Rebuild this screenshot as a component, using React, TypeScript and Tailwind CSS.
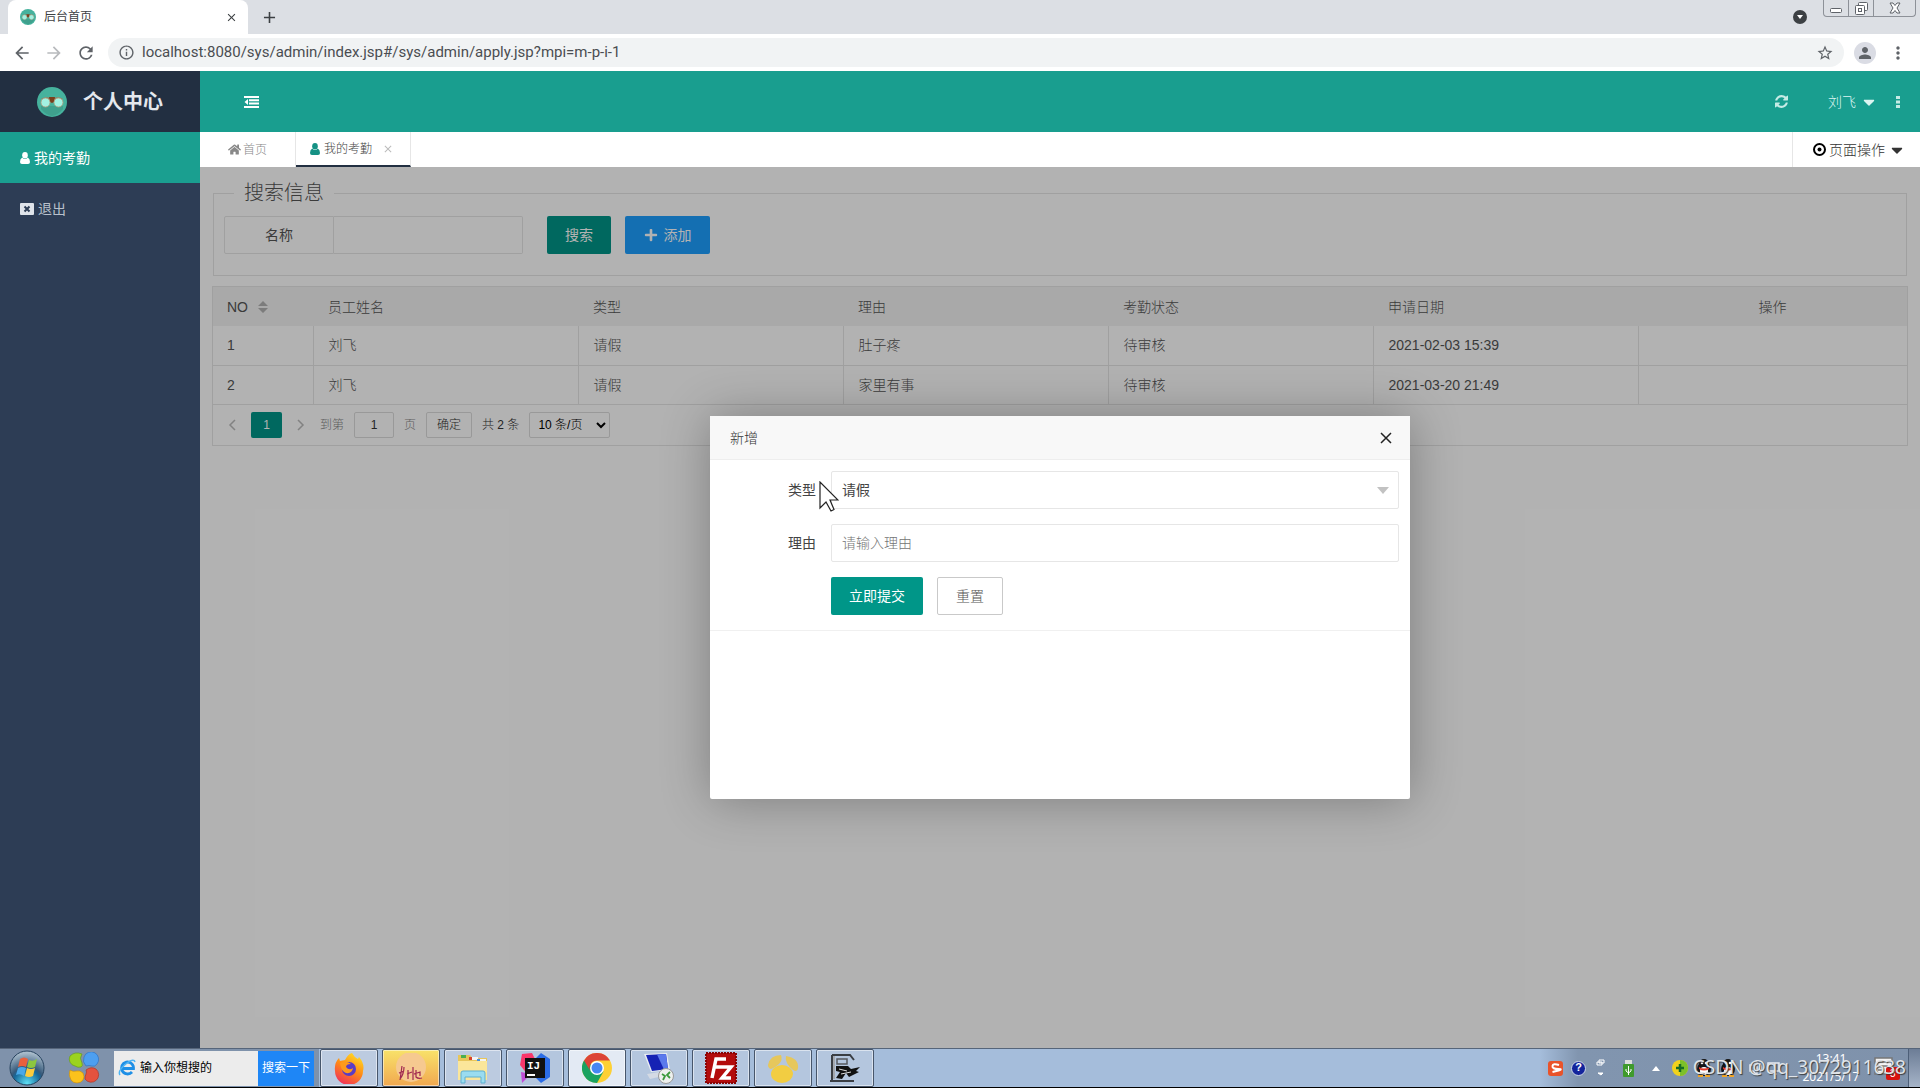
import { useState } from 'react'
import type { ReactNode } from 'react'
import { FaCaretDown, FaHome, FaPlus } from 'react-icons/fa'
import { MdArrowBack, MdArrowForward, MdRefresh, MdInfoOutline, MdStarBorder, MdPerson, MdMoreVert, MdClose, MdAdd } from 'react-icons/md'

const columns = ['员工姓名', '类型', '理由', '考勤状态', '申请日期']

const rows = [
  { no: 1, cells: ['刘飞', '请假', '肚子疼', '待审核', '2021-02-03 15:39'] },
  { no: 2, cells: ['刘飞', '请假', '家里有事', '待审核', '2021-03-20 21:49'] },
]

function GogglesLogo({ className }: { className: string }) {
  return (
    <svg className={className} viewBox="0 0 30 30" aria-hidden="true">
      <circle cx="15" cy="15" r="15" fill="#46b29d" />
      <path d="M4 19h22v3q-5 6-11 7-6-1-11-7z" fill="#3fa08d" />
      <path d="M4 12Q9 9 13 11l4 0q5-2 9 1l-2 2H6z" fill="#9a7a5c" />
      <path d="M12 10h6l-1 5-2 1-2-1z" fill="#7a3f1c" />
      <circle cx="8.500" cy="15.500" r="4.500" fill="#a2f2e2" stroke="#b59a7c" strokeWidth="0.800" />
      <circle cx="21.500" cy="15.500" r="4.500" fill="#a2f2e2" stroke="#b59a7c" strokeWidth="0.800" />
    </svg>
  )
}

function UserIcon({ className }: { className?: string }) {
  return (
    <svg className={className} width="10" height="12" viewBox="0 0 10 12" fill="currentColor" aria-hidden="true">
      <ellipse cx="5" cy="3.300" rx="2.800" ry="3.300" />
      <path d="M2.200 5.500Q5 8.500 7.800 5.500 10 6.500 10 10q0 2-2 2H2q-2 0-2-2 0-3.500 2.200-4.500z" />
    </svg>
  )
}

function BrowserBar() {
  return (
    <header className="shrink-0 font-['Noto_Sans','Noto_Sans_CJK_SC',sans-serif]">
      <div className="flex h-[34px] items-start justify-between bg-[#dcdfe4] pl-2">
        <div className="flex h-full items-center">
          <div className="flex h-full w-[240px] items-center rounded-t-lg bg-white pl-3 pr-1.5">
            <GogglesLogo className="h-4 w-4" />
            <span className="ml-2 flex-1 text-xs text-[#3c4043]">后台首页</span>
            <button aria-label="关闭标签页" className="p-1 text-[#3c4043]">
              <MdClose size={13} />
            </button>
          </div>
          <button aria-label="新标签页" className="ml-3 text-[#3c4043]">
            <MdAdd size={19} />
          </button>
        </div>
        <div className="flex items-start pr-1">
          <button aria-label="搜索标签页" className="mt-2.5 mr-4 text-[#3c4043]">
            <svg width="14" height="14" viewBox="0 0 14 14">
              <circle cx="7" cy="7" r="7" fill="currentColor" />
              <path d="M4 5h6l-3 4z" fill="#fff" />
            </svg>
          </button>
          <div className="flex h-[17px] rounded-b border border-t-0 border-[#8d9198] text-[#5f6369]">
            <button aria-label="最小化" className="flex w-[25px] items-center justify-center border-r border-[#8d9198]">
              <svg width="12" height="14" viewBox="0 0 12 14" fill="#fff" stroke="currentColor">
                <rect x="0.5" y="7.5" width="11" height="4" rx="1" />
              </svg>
            </button>
            <button aria-label="还原" className="flex w-[25px] items-center justify-center border-r border-[#8d9198]">
              <svg width="13" height="13" viewBox="0 0 13 13" fill="#fff" stroke="currentColor">
                <rect x="3.5" y="0.5" width="9" height="8" rx="1" />
                <rect x="0.5" y="3.5" width="9" height="9" rx="1" />
                <rect x="3.5" y="6.5" width="3" height="3" />
              </svg>
            </button>
            <button aria-label="关闭窗口" className="flex w-[41px] items-center justify-center">
              <svg width="12" height="12" viewBox="0 0 12 12" fill="#fff" stroke="currentColor">
                <path d="M1 1h3l2 2.500L8 1h3L8 6l3 5H8L6 8.500 4 11H1l3-5z" />
              </svg>
            </button>
          </div>
        </div>
      </div>

      <div className="flex h-[37px] items-center bg-white px-3 text-[#5f6368]">
        <button aria-label="后退"><MdArrowBack size={20} /></button>
        <button aria-label="前进" className="ml-3 text-[#b8babd]"><MdArrowForward size={20} /></button>
        <button aria-label="刷新" className="ml-3"><MdRefresh size={20} /></button>
        <div className="ml-3 flex h-[29px] flex-1 items-center rounded-full bg-[#f1f3f4] px-2.5">
          <MdInfoOutline size={17} />
          <input
            aria-label="地址"
            defaultValue="localhost:8080/sys/admin/index.jsp#/sys/admin/apply.jsp?mpi=m-p-i-1"
            className="ml-[7px] flex-1 bg-transparent font-[Roboto,sans-serif] text-[15px] text-[#4a4d51] outline-none"
          />
          <button aria-label="收藏"><MdStarBorder size={18} /></button>
        </div>
        <button aria-label="用户" className="ml-2.5 flex h-[22px] w-[22px] items-center justify-center rounded-full bg-[#dadce4]">
          <MdPerson size={18} />
        </button>
        <button aria-label="菜单" className="ml-3"><MdMoreVert size={20} /></button>
      </div>
    </header>
  )
}

function Sidebar() {
  return (
    <aside className="flex w-[200px] shrink-0 flex-col bg-[#2d3d55]">
      <div className="flex h-[61px] items-center bg-[#222f41] pl-[37px]">
        <GogglesLogo className="h-[30px] w-[30px]" />
        <h1 className="ml-4 text-xl font-bold text-[#e4e8ee]">个人中心</h1>
      </div>
      <nav>
        <a href="#apply" className="flex h-[51px] items-center gap-1 bg-[#1a9f90] pl-5 text-sm text-white">
          <UserIcon />
          我的考勤
        </a>
        <a href="#logout" className="flex h-[51px] items-center gap-1 pl-5 text-sm text-[#b8c0cb]">
          <svg width="14" height="12" viewBox="0 0 14 12">
            <rect width="14" height="12" rx="1" fill="#dfe4ea" />
            <path d="M4.500 3.500l5 5M9.500 3.500l-5 5" stroke="#2d3d55" strokeWidth="2" />
          </svg>
          退出
        </a>
      </nav>
    </aside>
  )
}

function TopBar() {
  return (
    <div className="flex h-[61px] shrink-0 items-center justify-between bg-[#199e8f] pr-5 pl-11 text-[#c5ebe5]">
      <button aria-label="收起菜单" className="text-white">
        <svg width="15" height="12" viewBox="0 0 15 12" fill="currentColor">
          <path d="M0 0h15v2H0zM5 3.300h10v2H5zM5 6.600h10v2H5zM0 10h15v2H0zM4 3v6L0.500 6z" />
        </svg>
      </button>
      <div className="flex items-center">
        <button aria-label="刷新页面">
          <svg width="13" height="13" viewBox="0 0 1536 1536" fill="currentColor">
            <path d="M1511 928q0 5-1 7-64 268-268 434.500t-478 166.500q-146 0-282.500-55t-243.500-157l-129 129q-19 19-45 19t-45-19-19-45v-448q0-26 19-45t45-19h448q26 0 45 19t19 45-19 45l-137 137q71 66 161 102t187 36q134 0 250-65t186-179q11-17 53-117 8-23 30-23h192q13 0 22.500 9.500t9.500 22.500zm25-800v448q0 26-19 45t-45 19h-448q-26 0-45-19t-19-45 19-45l138-138q-148-137-349-137-134 0-250 65t-186 179q-11 17-53 117-8 23-30 23h-199q-13 0-22.500-9.500t-9.500-22.500v-7q65-268 270-434.500t480-166.500q146 0 284 55.500t245 156.500l130-129q19-19 45-19t45 19 19 45z" />
          </svg>
        </button>
        <button className="ml-10 flex items-center gap-1 text-sm font-light text-[#dcf5f1]">
          刘飞
          <FaCaretDown size={18} />
        </button>
        <button aria-label="更多" className="ml-[18px]">
          <svg width="4" height="12" viewBox="0 0 4 12" fill="currentColor">
            <path d="M0 0h4v3H0zM0 4.500h4v3H0zM0 9h4v3H0z" />
          </svg>
        </button>
      </div>
    </div>
  )
}

function PageTabs() {
  return (
    <div className="flex h-[35px] shrink-0 bg-white text-xs">
      <a href="#home" className="flex w-24 items-center gap-0.5 border-r border-[#e6e6e6] pl-7 font-light text-[#888]">
        <FaHome size={13} />
        首页
      </a>
      <div className="flex w-[115px] items-center border-r border-b-2 border-r-[#e6e6e6] border-b-[#222f41] pl-3.5 text-[#444]">
        <a href="#apply" className="flex items-center gap-1 font-light">
          <UserIcon className="text-[#159184]" />
          我的考勤
        </a>
        <button aria-label="关闭" className="ml-2.5 text-[#bbb]"><MdClose size={12} /></button>
      </div>
      <button className="ml-auto flex w-32 items-center gap-[3px] border-l border-[#e6e6e6] pl-5 text-sm font-light text-[#333]">
        <svg width="13" height="13" viewBox="0 0 13 13" className="text-black">
          <circle cx="6.500" cy="6.500" r="5.500" fill="none" stroke="currentColor" strokeWidth="2" />
          <circle cx="6.500" cy="6.500" r="2" fill="currentColor" />
        </svg>
        页面操作
        <FaCaretDown size={18} />
      </button>
    </div>
  )
}

function SearchPanel() {
  return (
    <fieldset className="mx-[13px] h-[97px] border border-[#e6e6e6] px-2.5">
      <legend className="ml-2.5 px-2.5 text-xl font-light text-[#555]">搜索信息</legend>
      <form className="flex pt-[9px]" onSubmit={(e) => e.preventDefault()}>
        <label htmlFor="name" className="flex h-[38px] w-[110px] items-center justify-center rounded-l-xs border border-[#e6e6e6]">
          名称
        </label>
        <input id="name" className="h-[38px] w-[189px] rounded-r-xs border border-l-0 border-[#e6e6e6] bg-transparent px-2.5" />
        <button className="ml-6 h-[38px] w-16 rounded-xs bg-[#009688] text-white">搜索</button>
        <button type="button" className="ml-3.5 flex h-[38px] w-[85px] items-center justify-center gap-1.5 rounded-xs bg-[#1e9fff] text-white">
          <FaPlus size={14} />
          添加
        </button>
      </form>
    </fieldset>
  )
}

function ApplyTable() {
  return (
    <div className="mx-3 mt-2.5 border border-[#e6e6e6]">
      <table className="w-full table-fixed border-collapse text-left">
        <colgroup>
          <col className="w-[100px]" />
          {columns.map((c) => (
            <col key={c} className="w-[265px]" />
          ))}
          <col />
        </colgroup>
        <thead>
          <tr className="h-[39px] bg-[#f2f2f2]">
            <th className="px-3.5 font-normal">
              <span className="flex items-center gap-2.5">
                NO
                <svg width="10" height="12" viewBox="0 0 10 12" fill="#b2b2b2">
                  <path d="M5 0l5 5H0zM0 7h10l-5 5z" />
                </svg>
              </span>
            </th>
            {columns.map((c) => (
              <th key={c} className="px-[15px] font-light">{c}</th>
            ))}
            <th className="text-center font-light">操作</th>
          </tr>
        </thead>
        <tbody>
          {rows.map((row) => (
            <tr key={row.no} className="h-[39px] border-b border-[#e6e6e6]">
              <td className="border-r border-[#e6e6e6] px-3.5">{row.no}</td>
              {row.cells.map((cell, i) => (
                <td key={i} className="border-r border-[#e6e6e6] px-[15px] font-light">{cell}</td>
              ))}
              <td />
            </tr>
          ))}
        </tbody>
      </table>
      <Pager />
    </div>
  )
}

function Pager() {
  return (
    <div className="flex h-10 items-center pl-[15px] text-xs text-[#333]">
      <button aria-label="上一页" className="text-[#bbb]">
        <svg width="8" height="12" viewBox="0 0 8 12" fill="none" stroke="currentColor" strokeWidth="1.500"><path d="M7 1L2 6l5 5" /></svg>
      </button>
      <button className="ml-[15px] h-[26px] w-[31px] rounded-xs bg-[#009688] text-white">1</button>
      <button aria-label="下一页" className="ml-[15px] text-[#bbb]">
        <svg width="8" height="12" viewBox="0 0 8 12" fill="none" stroke="currentColor" strokeWidth="1.500"><path d="M1 1l5 5-5 5" /></svg>
      </button>
      <label htmlFor="page" className="ml-[15px] font-light text-[#888]">到第</label>
      <input id="page" defaultValue="1" className="mx-2.5 h-[26px] w-10 rounded-xs border border-[#dcdcdc] bg-transparent text-center" />
      <span className="font-light text-[#888]">页</span>
      <button className="ml-2.5 h-[26px] w-[46px] rounded-xs border border-[#dcdcdc] font-light">确定</button>
      <span className="mx-2.5 font-light">共 2 条</span>
      <select aria-label="每页条数" className="h-[26px] w-[81px] rounded-xs border border-[#dcdcdc] bg-transparent px-1 font-light text-black">
        <option>10 条/页</option>
      </select>
    </div>
  )
}

function AddDialog({ onClose }: { onClose: () => void }) {
  return (
    <div className="absolute inset-0 flex items-center justify-center bg-black/30">
      <section
        role="dialog"
        aria-label="新增"
        className="relative h-[383px] w-[700px] rounded-xs bg-white shadow-[1px_1px_50px_rgba(0,0,0,0.3)]"
      >
        <div className="flex h-11 items-center justify-between border-b border-[#eee] bg-[#f8f8f8] pr-4 pl-5">
          <h2 className="font-light text-[#333]">新增</h2>
          <button aria-label="关闭" onClick={onClose} className="text-[#222]">
            <svg width="16" height="16" viewBox="0 0 16 16" fill="none" stroke="currentColor" strokeWidth="1.500"><path d="M3 3l10 10M13 3L3 13" /></svg>
          </button>
        </div>
        <form className="flex flex-col gap-[15px] border-b border-[#f0f0f0] pt-[11px] pr-[11px] pb-[15px]" onSubmit={(e) => e.preventDefault()}>
          <div className="flex items-center">
            <label htmlFor="type" className="w-[121px] pr-[15px] text-right text-[#444]">类型</label>
            <div className="relative flex-1">
              <select id="type" className="h-[38px] w-full appearance-none rounded-xs border border-[#e6e6e6] pl-2.5 text-[#444]">
                <option>请假</option>
              </select>
              <svg width="12" height="7" viewBox="0 0 12 7" className="pointer-events-none absolute top-4 right-2.5" fill="#c2c2c2">
                <path d="M0 0h12L6 7z" />
              </svg>
            </div>
          </div>
          <div className="flex items-center">
            <label htmlFor="reason" className="w-[121px] pr-[15px] text-right text-[#444]">理由</label>
            <input
              id="reason"
              placeholder="请输入理由"
              className="h-[38px] flex-1 rounded-xs border border-[#e6e6e6] pl-2.5 font-light placeholder:text-[#757575]"
            />
          </div>
          <div className="flex gap-3.5 pl-[121px]">
            <button className="h-[38px] w-[92px] rounded-xs bg-[#009688] text-white">立即提交</button>
            <button type="reset" className="h-[38px] w-[66px] rounded-xs border border-[#c9c9c9] font-light text-[#555]">重置</button>
          </div>
        </form>
        <svg className="pointer-events-none absolute top-[65px] left-[109px]" width="20" height="32" viewBox="0 0 20 32">
          <path d="M1 1v26l6-6 5 9 3-1.500-4-9.500h8z" fill="#fff" stroke="#222" strokeWidth="1.200" />
        </svg>
      </section>
    </div>
  )
}

function StartOrb() {
  return (
    <svg width="36" height="36" viewBox="0 0 36 36">
      <defs>
        <radialGradient id="orb" cx="0.500" cy="0.950" r="0.900">
          <stop offset="0" stopColor="#5fe0f5" />
          <stop offset="0.450" stopColor="#16689a" />
          <stop offset="0.550" stopColor="#35597a" />
          <stop offset="1" stopColor="#a9bccb" />
        </radialGradient>
      </defs>
      <circle cx="18" cy="18" r="17" fill="url(#orb)" stroke="#26425e" />
      <path d="M11 9q4-3 8 0l-2 8q-4-2-8 0z" fill="#e8603c" />
      <path d="M20 10q4 2 8-1l-2 8q-4 2-8 0z" fill="#8cc63f" />
      <path d="M9 18q4-2 8 0l-2 8q-4-3-8-1z" fill="#4aa8e8" />
      <path d="M18 18q4 2 8 0l-2 8q-4 2-8 0z" fill="#fccb3c" />
    </svg>
  )
}

function PetalIcon() {
  return (
    <svg width="32" height="32" viewBox="0 0 32 32" strokeWidth="0.600">
      <path d="M14 2Q11 6 14 11q1 3-1 4-3 1-6-1A7 7 0 0 1 2 4Q7-1 14 2z" fill="#9bd31e" stroke="#5f9a10" />
      <path d="M18 14q-4-4-2-9a7.500 7.500 0 1 1 13 7q-2 3-5 2-3-1-6 0z" fill="#4d9ff0" stroke="#2a6cc0" />
      <path d="M2 18q3 2 6 1 4-1 7 2 2 4 0 7a7.500 7.500 0 0 1-12 0q-3-5-1-10z" fill="#fbc21c" stroke="#c98a08" />
      <path d="M18 18q5-4 10-1a7.500 7.500 0 1 1-11 10q0-3 1-5 1-2 0-4z" fill="#e4523e" stroke="#b02a1a" />
    </svg>
  )
}

function IeIcon() {
  return (
    <svg width="18" height="18" viewBox="0 0 18 18" fill="none">
      <path d="M4 9.500h11.500A6 6 0 1 0 14 13" stroke="#1e8fe6" strokeWidth="2.800" />
      <path d="M2 16Q-1 12 9 4q7-5 8-1" stroke="#4cb4f4" strokeWidth="1.500" />
    </svg>
  )
}

function FirefoxIcon() {
  return (
    <svg width="32" height="32" viewBox="0 0 32 32">
      <defs>
        <linearGradient id="fox" x1="0.800" y1="0" x2="0.300" y2="1">
          <stop offset="0" stopColor="#ffe226" />
          <stop offset="0.500" stopColor="#ff8a16" />
          <stop offset="1" stopColor="#f0305a" />
        </linearGradient>
      </defs>
      <path d="M19 1q2 4 6 6l1-2q6 7 4 14a14 14 0 0 1-28 0Q1 11 6 6l1 3 5-1q3-6 7-7z" fill="url(#fox)" />
      <circle cx="16" cy="17" r="7" fill="#5b3cc4" />
      <path d="M7 11q6-3 11 1-5 0-5 3 3 4 7 1-1 6-7 5-5-2-6-10z" fill="#ff9a1c" />
    </svg>
  )
}

function FolderIcon() {
  return (
    <svg width="34" height="32" viewBox="0 0 34 32">
      <path d="M2 3h12l2 3h15v22H2z" fill="#e8c65a" />
      <path d="M5 3h5v3H5z" fill="#4caf50" />
      <path d="M13 5h9v3h-9z" fill="#f4f4f4" />
      <path d="M13 5h3v3h-3z" fill="#d8432a" />
      <path d="M21 7h9v3h-9z" fill="#f4f4f4" />
      <path d="M21 7h3v3h-3z" fill="#4a90d8" />
      <path d="M2 9h29v19H2z" fill="#fbe69a" />
      <path d="M5 31V21q0-2 2-2h20q2 0 2 2v10h-4v-6H9v6z" fill="#9adcf0" stroke="#5fb0d0" />
    </svg>
  )
}

function IdeaIcon() {
  return (
    <svg width="32" height="32" viewBox="0 0 32 32">
      <path d="M3 2l10-1 5 10-9 12-8-10z" fill="#f8376b" />
      <path d="M17 6l5-5 9 6v18l-9 6-8-8z" fill="#2b6ce6" />
      <path d="M2 20l10 2-9 9z" fill="#c04fd8" />
      <rect x="6" y="6" width="20" height="20" fill="#111" />
      <text x="8" y="17" fontSize="11" fontWeight="700" fill="#fff" fontFamily="Liberation Mono, monospace">IJ</text>
      <path d="M8 22h8v2H8z" fill="#fff" />
    </svg>
  )
}

function ChromeIcon() {
  return (
    <svg width="30" height="30" viewBox="0 0 30 30">
      <circle cx="15" cy="15" r="15" fill="#fdd034" />
      <path d="M2 7.500A15 15 0 0 0 15 30l6.500-11.500L15 15z" fill="#1aa260" />
      <path d="M2 7.500A15 15 0 0 1 28 7.500H15a7.500 7.500 0 0 0-7 10z" fill="#dc4437" />
      <circle cx="15" cy="15" r="7" fill="#fff" />
      <circle cx="15" cy="15" r="5.500" fill="#4587f3" />
    </svg>
  )
}

function RemoteIcon() {
  return (
    <svg width="32" height="32" viewBox="0 0 32 32">
      <path d="M1 2l23-1 3 17-19 2z" fill="#e8ecf2" />
      <path d="M3 3l20-1 2 15-16 2z" fill="#1522b4" />
      <path d="M14 2.500l9-0.500 2 15-4 0.500z" fill="#5b79ec" />
      <path d="M4 22l13-2 3 4-13 3z" fill="#d4dae4" />
      <circle cx="23" cy="24" r="7.500" fill="#eef0ee" stroke="#999" />
      <path d="M19 22l3 2-2 4M27 20l-3 3 3 3" stroke="#3c9a3c" strokeWidth="1.800" fill="none" />
    </svg>
  )
}

function FileZillaIcon() {
  return (
    <svg width="32" height="32" viewBox="0 0 32 32">
      <rect x="1" y="1" width="30" height="30" fill="#b30c0c" stroke="#8a0404" strokeWidth="2" strokeDasharray="2 1" />
      <path d="M7 26L11 7h10M9 15h9M17 15h9l-9 11h9" stroke="#fff" strokeWidth="3.500" fill="none" />
    </svg>
  )
}

function NavicatIcon() {
  return (
    <svg width="32" height="30" viewBox="0 0 32 30">
      <path d="M1 12Q3 2 14 2q2 5-2 9-3 3-8 5-3-1-3-4zM31 15Q32 5 19 3q-1 5 3 10 4 5 7 5 2-1 2-3z" fill="#e6c75c" />
      <ellipse cx="15" cy="21" rx="11" ry="9" fill="#f2cd42" />
    </svg>
  )
}

function RecorderIcon() {
  return (
    <svg width="34" height="30" viewBox="0 0 34 30" fill="none">
      <path d="M4 2h18l4 5M4 2v25M2 28h24" stroke="#3a3e44" strokeWidth="2" />
      <path d="M6 3v23" stroke="#a4a8ae" strokeWidth="2" />
      <path d="M9 6h10v5H9z" stroke="#55595f" strokeWidth="1.500" />
      <path d="M8 13h12l3 3 9-2-4 4 3 1-10 5-3-4-4 6-6-1 4-6-4-1z" fill="#111" />
      <path d="M11 16l8 2M13 21l10-2" stroke="#ddd" />
    </svg>
  )
}

function NoteIcon() {
  return (
    <svg width="32" height="30" viewBox="0 0 32 30">
      <circle cx="16" cy="14" r="15" fill="#f6c990" />
      <path d="M7 13L5 27M4 20l5-2M9 14q0 7-4 12M13 17v9M12 21l5-2M18 14v13M21 17v7q2 2 6 1M19 21l6-2v4" stroke="#a02850" strokeWidth="1.200" fill="none" />
    </svg>
  )
}

const apps: { label: string; icon: ReactNode; face: string }[] = [
  { label: 'Firefox', icon: <FirefoxIcon />, face: 'bg-[#bccbe0]' },
  { label: '便签', icon: <NoteIcon />, face: 'bg-linear-to-b from-[#f8e26a] to-[#f0a850]' },
  { label: '资源管理器', icon: <FolderIcon />, face: 'bg-[#bccbe0]' },
  { label: 'IntelliJ IDEA', icon: <IdeaIcon />, face: 'bg-[#b4c6de]' },
  { label: 'Chrome', icon: <ChromeIcon />, face: 'bg-[#e3eaf4]' },
  { label: '远程桌面', icon: <RemoteIcon />, face: 'bg-[#b4c6de]' },
  { label: 'FileZilla', icon: <FileZillaIcon />, face: 'bg-[#b4c6de]' },
  { label: 'Navicat', icon: <NavicatIcon />, face: 'bg-[#b4c6de]' },
  { label: '录屏', icon: <RecorderIcon />, face: 'bg-[#b4c6de]' },
]

function PenguinIcon() {
  return (
    <svg width="16" height="18" viewBox="0 0 16 18">
      <ellipse cx="8" cy="10" rx="7" ry="7" fill="#151515" />
      <circle cx="8" cy="5" r="5" fill="#151515" />
      <ellipse cx="8" cy="12" rx="4" ry="4" fill="#fff" />
      <path d="M3 8q5 3 10 0v2q-5 3-10 0z" fill="#e23a2a" />
      <circle cx="6" cy="4" r="1.300" fill="#fff" />
      <circle cx="10" cy="4" r="1.300" fill="#fff" />
      <path d="M2 16h5v2H2zM9 16h5v2H9z" fill="#f5a623" />
    </svg>
  )
}

function Tray() {
  return (
    <div className="relative flex h-full w-[380px] items-center bg-linear-to-r from-[#a5bddb] from-0% via-[#8195af] via-10% to-[#7f92ab] pl-2 text-white">
      <svg width="15" height="15" viewBox="0 0 15 15">
        <rect width="15" height="15" rx="3" fill="#e9532a" />
        <path d="M11 4Q5 2 4.500 5t6 3-6 3" stroke="#fff" strokeWidth="2" fill="none" />
      </svg>
      <span className="ml-2 flex h-[15px] w-[15px] items-center justify-center rounded-full border border-[#cfd8e8] bg-[#13249c] text-[11px] font-bold">?</span>
      <svg className="ml-2.5" width="9" height="18" viewBox="0 0 9 18" fill="none" stroke="#fff">
        <path d="M3 1h5v3H3zM1 3h5v3H1z" />
        <path d="M2 14h5l-2 2z" fill="#fff" />
      </svg>
      <svg className="ml-[18px]" width="11" height="17" viewBox="0 0 11 17">
        <path d="M2 0h7v5H2z" fill="#ddd" />
        <rect y="4" width="11" height="13" rx="1" fill="#3f9a2c" />
        <path d="M5.500 6v9M3 9v2l2.500 2L8 11V9" stroke="#fff" fill="none" />
      </svg>
      <svg className="ml-[18px]" width="8" height="5" viewBox="0 0 8 5" fill="#fff"><path d="M0 5l4-5 4 5z" /></svg>
      <svg className="ml-3" width="16" height="16" viewBox="0 0 16 16">
        <circle cx="8" cy="8" r="8" fill="#f2d21c" />
        <path d="M8 0a8 8 0 0 1 0 16z" fill="#7cc02a" />
        <path d="M8 4v8M4 8h8" stroke="#166b24" strokeWidth="2.500" />
      </svg>
      <div className="ml-2 flex gap-2">
        <PenguinIcon />
        <PenguinIcon />
      </div>
      <svg className="ml-3" width="34" height="16" viewBox="0 0 34 16" fill="none" stroke="#e8ecf2" strokeWidth="1.500">
        <path d="M2 5h3l4-4v14l-4-4H2zM12 4q3 4 0 8M20 3h11v8H20zM23 14h6" />
      </svg>
      <div className="ml-[18px] w-[62px] text-center font-['Noto_Sans',sans-serif] text-xs leading-[18px]">
        <div>13:41</div>
        <div>2021/5/17</div>
      </div>
      <svg className="ml-3" width="26" height="26" viewBox="0 0 26 26">
        <path d="M1 3h17v16H1zM4 7h10M4 11h10M4 15h6" fill="#f4f4f4" stroke="#777" strokeWidth="1.500" />
        <rect x="12" y="12" width="14" height="13" rx="2" fill="#d9130f" />
        <text x="16" y="22" fontSize="10" fill="#fff" fontFamily="Liberation Sans, sans-serif">3</text>
      </svg>
      <div className="ml-auto h-full w-3 border-l border-[#4d5f78] bg-linear-to-b from-[#6c7d96] to-[#a6b4c8]" />
      <span className="absolute right-3.5 bottom-1.5 font-['Noto_Sans',sans-serif] text-[19px] whitespace-nowrap text-[#dfe3e8] [text-shadow:1px_1px_1px_rgba(50,50,50,0.9)]">
        CSDN @qq_3072911638
      </span>
    </div>
  )
}

function Taskbar() {
  return (
    <footer className="flex h-10 shrink-0 items-center border-t border-b border-t-[#56657a] border-b-black bg-[#a5bddb]">
      <div className="flex h-full w-[319px] items-center bg-[#7f92ab] pl-[9px]">
        <button aria-label="开始"><StartOrb /></button>
        <button aria-label="桌面助手" className="ml-[23px]"><PetalIcon /></button>
        <form className="ml-3.5 flex h-[35px] items-center bg-[#ececec] text-xs" onSubmit={(e) => e.preventDefault()}>
          <span className="pl-1"><IeIcon /></span>
          <input aria-label="桌面搜索" placeholder="输入你想搜的" className="w-[122px] pl-1 placeholder:text-black" />
          <button className="h-full w-14 bg-[#1e86f6] text-white">搜索一下</button>
        </form>
      </div>
      <div className="flex h-full flex-1 gap-1 pl-px">
        {apps.map((app) => (
          <button
            key={app.label}
            aria-label={app.label}
            className={`flex h-full w-[58px] items-center justify-center rounded-xs border border-[#47566b] inset-ring inset-ring-white/50 ${app.face}`}
          >
            {app.icon}
          </button>
        ))}
      </div>
      <Tray />
    </footer>
  )
}

export default function App() {
  const [dialogOpen, setDialogOpen] = useState(true)

  return (
    <div className="flex h-screen flex-col overflow-hidden font-['Liberation_Sans','Noto_Sans_CJK_SC',sans-serif] text-sm">
      <BrowserBar />
      <div className="flex min-h-0 flex-1">
        <Sidebar />
        <div className="flex min-w-0 flex-1 flex-col">
          <TopBar />
          <PageTabs />
          <main className="relative flex-1 bg-white pt-3 text-[#555]">
            <SearchPanel />
            <ApplyTable />
            {dialogOpen && <AddDialog onClose={() => setDialogOpen(false)} />}
          </main>
        </div>
      </div>
      <Taskbar />
    </div>
  )
}
